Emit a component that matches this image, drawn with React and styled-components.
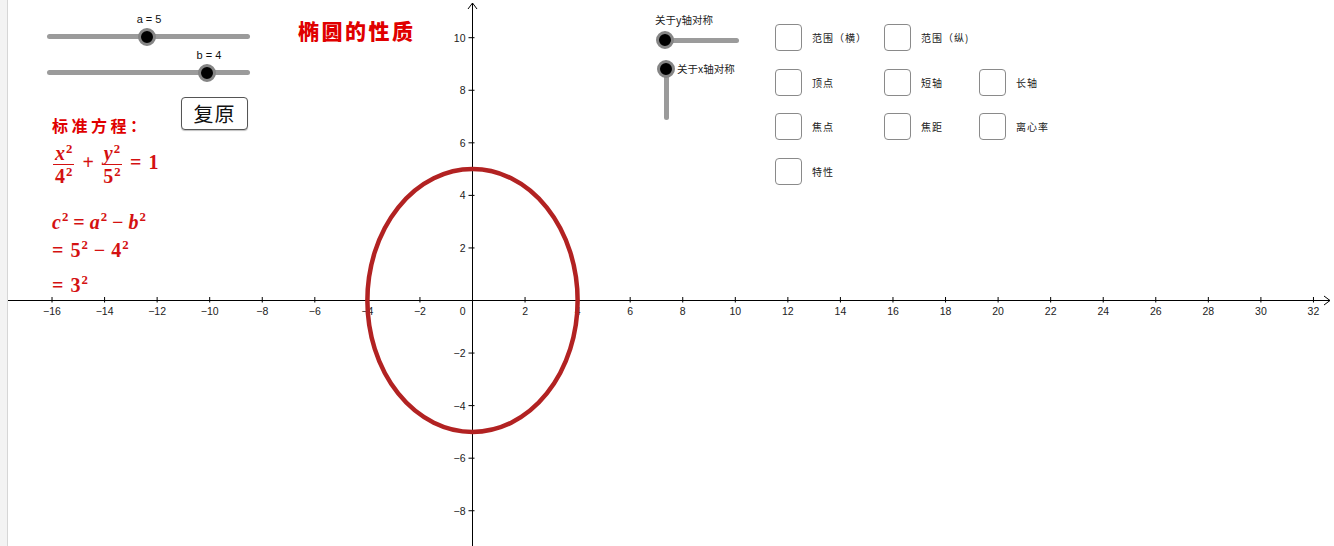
import React from 'react';
import styled, { createGlobalStyle } from 'styled-components';

const UNIT = 26.28;
const OX = 464.5;
const OY = 300.5;
const RED = '#e00000';
const MATH_RED = '#d41111';

const GlobalStyle = createGlobalStyle`
  html, body {
    margin: 0;
    padding: 0;
    background: #fff;
  }
  body {
    font-family: "Liberation Sans", Arial, sans-serif;
    overflow: hidden;
  }
`;

const Page = styled.div`
  display: flex;
  width: 1334px;
  height: 546px;
  overflow: hidden;
`;

const Gutter = styled.div`
  flex: none;
  width: 7px;
  background: #f3f3f3;
  border-right: 1px solid #d6d6d6;
`;

const Canvas = styled.div`
  position: relative;
  flex: 1;
  height: 100%;
  background: #fff;
`;

const GraphSvg = styled.svg`
  position: absolute;
  inset: 0;
  width: 100%;
  height: 100%;
`;

const TickLabel = styled.text`
  font-family: "Liberation Sans", Arial, sans-serif;
  font-size: 10.5px;
  fill: #222;
`;

// ---- free canvas objects ----
const Placed = styled.div`
  position: absolute;
  left: ${(p) => p.$x}px;
  top: ${(p) => p.$y}px;
`;

const SliderStack = styled.div`
  display: flex;
  flex-direction: column;
`;

const SliderBox = styled.div`
  position: relative;
  width: ${(p) => p.$length}px;
  padding: 22px 0 9px;
`;

const Track = styled.div`
  height: 5px;
  border-radius: 3px;
  background: #9b9b9b;
`;

const Knob = styled.div`
  position: absolute;
  width: 18px;
  height: 18px;
  box-sizing: border-box;
  border-radius: 50%;
  background: #000;
  border: 3px solid #858585;
`;

const SliderKnob = styled(Knob)`
  top: 15.5px;
  margin-left: -9px;
`;

const SliderLabel = styled.span`
  position: absolute;
  top: 0;
  transform: translateX(-50%);
  margin-left: 2px;
  font-size: 11px;
  line-height: 14px;
  color: #111;
  white-space: nowrap;
`;

const Title = styled.h1`
  margin: 0;
  font-family: "Noto Sans CJK SC", sans-serif;
  font-size: 21px;
  font-weight: 900;
  line-height: 26px;
  letter-spacing: 2.5px;
  color: ${RED};
`;

const ResetButton = styled.button`
  width: 67px;
  height: 33px;
  padding: 0;
  border: 1px solid #555;
  border-radius: 4px;
  background: #fff;
  box-shadow: 0 1px 1px rgba(0, 0, 0, 0.25);
  font-family: "Noto Sans CJK SC", sans-serif;
  font-size: 20px;
  line-height: 1;
  letter-spacing: 1px;
  color: #111;
`;

const FormulaBlock = styled.div`
  display: flex;
  flex-direction: column;
  color: ${MATH_RED};
`;

const Heading = styled.div`
  font-family: "Noto Sans CJK SC", sans-serif;
  font-size: 16px;
  font-weight: 700;
  line-height: 20px;
  letter-spacing: 3.5px;
  color: ${RED};
`;

const MathRow = styled.div`
  height: ${(p) => p.$h}px;
  line-height: ${(p) => p.$h}px;
  margin-top: ${(p) => p.$gap || 0}px;
  font-family: "Liberation Serif", "Times New Roman", serif;
  font-weight: 700;
  font-size: 20px;
  white-space: nowrap;
`;

const Frac = styled.span`
  display: inline-flex;
  flex-direction: column;
  align-items: stretch;
  vertical-align: middle;
  font-size: 20px;
  line-height: 19px;
  margin: 0 1px;
`;

const Num = styled.span`
  text-align: center;
  padding: 2px 2px 1px;
`;

const Den = styled.span`
  text-align: center;
  border-top: 1.6px solid currentColor;
  padding-top: 2px;
`;

const V = styled.i`
  font-style: italic;
`;

const Sup = styled.sup`
  font-size: 0.64em;
  line-height: 0;
  vertical-align: 0.6em;
  margin-left: 1px;
`;

const Op = styled.span`
  margin: 0 ${(p) => p.$m ?? 5}px;
  margin-right: ${(p) => p.$r ?? p.$m ?? 5}px;
`;

const ToggleGroup = styled.div`
  display: flex;
  flex-direction: column;
  font-family: "Noto Sans CJK SC", sans-serif;
  font-size: 10.5px;
  color: #222;
`;

const Caption = styled.span`
  line-height: 12px;
  margin-left: 1px;
`;

const HToggle = styled.div`
  position: relative;
  width: 83px;
  height: 18px;
  margin-top: 5px;
  margin-left: 2px;
`;

const HTrack = styled(Track)`
  position: absolute;
  left: 9px;
  right: 0;
  top: 6.5px;
`;

const VToggle = styled.div`
  display: flex;
  align-items: flex-start;
  margin-top: 11px;
  margin-left: 3px;
`;

const Stem = styled.div`
  position: relative;
  flex: none;
  width: 18px;
  height: 60px;
`;

const VTrack = styled(Track)`
  position: absolute;
  left: 6.5px;
  top: 9px;
  width: 5px;
  height: 51px;
`;

const StemLabel = styled.span`
  line-height: 18px;
  margin-left: 2px;
`;

const CheckGrid = styled.div`
  display: grid;
  grid-template-columns: 109px 95px auto;
  grid-auto-rows: 27px;
  row-gap: 17.5px;
`;

const CheckItem = styled.label`
  display: flex;
  align-items: center;
  gap: 10px;
  grid-column: ${(p) => p.$col};
  font-family: "Noto Sans CJK SC", sans-serif;
  font-size: 10px;
  letter-spacing: 1px;
  color: #222;
`;

const Box = styled.span`
  flex: none;
  width: 27px;
  height: 27px;
  box-sizing: border-box;
  border: 1.5px solid #8a8a8a;
  border-radius: 4px;
  background: #fff;
`;

function Slider({ name, value, pos, length }) {
  return (
    <SliderBox $length={length}>
      <SliderLabel style={{ left: `${pos * 100}%` }}>
        {name} = {value}
      </SliderLabel>
      <Track />
      <SliderKnob style={{ left: `${pos * 100}%` }} />
    </SliderBox>
  );
}

function Graph() {
  const xs = [];
  for (let k = -16; k <= 32; k += 2) if (k !== 0) xs.push(k);
  const ys = [];
  for (let k = -8; k <= 10; k += 2) if (k !== 0) ys.push(k);
  const fmt = (n) => (n < 0 ? `\u2212${-n}` : `${n}`);

  return (
    <GraphSvg viewBox="0 0 1326 546">
      <line x1="0" y1={OY} x2="1322" y2={OY} stroke="#000" strokeWidth="1" />
      <polyline points={`1316,${OY - 4.5} 1322,${OY} 1316,${OY + 4.5}`} fill="none" stroke="#000" strokeWidth="1" />
      <line x1={OX} y1="546" x2={OX} y2="3" stroke="#000" strokeWidth="1" />
      <polyline points={`${OX - 4.5},9 ${OX},3 ${OX + 4.5},9`} fill="none" stroke="#000" strokeWidth="1" />

      {xs.map((k) => {
        const x = OX + k * UNIT;
        return (
          <g key={`x${k}`}>
            <line x1={x} y1={OY - 3.5} x2={x} y2={OY + 2} stroke="#000" strokeWidth="1" />
            <TickLabel x={x} y={OY + 14} textAnchor="middle">
              {fmt(k)}
            </TickLabel>
          </g>
        );
      })}
      <TickLabel x={OX - 7} y={OY + 14} textAnchor="end">
        0
      </TickLabel>

      {ys.map((k) => {
        const y = OY - k * UNIT;
        return (
          <g key={`y${k}`}>
            <line x1={OX - 4} x2={OX + 2} y1={y} y2={y} stroke="#000" strokeWidth="1" />
            <TickLabel x={OX - 7} y={y + 4} textAnchor="end">
              {fmt(k)}
            </TickLabel>
          </g>
        );
      })}

      <ellipse cx={OX} cy={OY} rx={4 * UNIT} ry={5 * UNIT} fill="none" stroke="#b22222" strokeWidth="4.5" />
    </GraphSvg>
  );
}

const checks = [
  { label: '范围（横）', col: 1 },
  { label: '范围（纵)', col: 2 },
  { label: '顶点', col: 1 },
  { label: '短轴', col: 2 },
  { label: '长轴', col: 3 },
  { label: '焦点', col: 1 },
  { label: '焦距', col: 2 },
  { label: '离心率', col: 3 },
  { label: '特性', col: 1 },
];

export default function App() {
  return (
    <Page>
      <GlobalStyle />
      <Gutter />
      <Canvas>
        <Graph />

        <Placed $x={39} $y={12}>
          <SliderStack>
            <Slider name="a" value={5} pos={0.493} length={203} />
            <Slider name="b" value={4} pos={0.788} length={203} />
          </SliderStack>
        </Placed>

        <Placed $x={290} $y={17}>
          <Title>椭圆的性质</Title>
        </Placed>

        <Placed $x={173} $y={97}>
          <ResetButton>复原</ResetButton>
        </Placed>

        <Placed $x={44} $y={115}>
          <FormulaBlock>
            <Heading>标准方程：</Heading>
            <MathRow $h={46} $gap={4}>
              <Frac>
                <Num>
                  <V>x</V>
                  <Sup>2</Sup>
                </Num>
                <Den>
                  4<Sup>2</Sup>
                </Den>
              </Frac>
              <Op $m={7}>+</Op>
              <Frac>
                <Num>
                  <V>y</V>
                  <Sup>2</Sup>
                </Num>
                <Den>
                  5<Sup>2</Sup>
                </Den>
              </Frac>
              <Op $m={7}>=</Op>1
            </MathRow>
            <MathRow $h={26} $gap={24}>
              <V>c</V>
              <Sup>2</Sup>
              <Op>=</Op>
              <V>a</V>
              <Sup>2</Sup>
              <Op>−</Op>
              <V>b</V>
              <Sup>2</Sup>
            </MathRow>
            <MathRow $h={26} $gap={2}>
              <Op $m={0} $r={7}>=</Op>5<Sup>2</Sup>
              <Op $m={6}>−</Op>4<Sup>2</Sup>
            </MathRow>
            <MathRow $h={26} $gap={9}>
              <Op $m={0} $r={7}>=</Op>3<Sup>2</Sup>
            </MathRow>
          </FormulaBlock>
        </Placed>

        <Placed $x={646} $y={14}>
          <ToggleGroup>
            <Caption>关于y轴对称</Caption>
            <HToggle>
              <HTrack />
              <Knob style={{ left: 0, top: 0 }} />
            </HToggle>
            <VToggle>
              <Stem>
                <VTrack />
                <Knob style={{ left: 0, top: 0 }} />
              </Stem>
              <StemLabel>关于x轴对称</StemLabel>
            </VToggle>
          </ToggleGroup>
        </Placed>

        <Placed $x={767} $y={24}>
          <CheckGrid>
            {checks.map((c) => (
              <CheckItem key={c.label} $col={c.col}>
                <Box />
                {c.label}
              </CheckItem>
            ))}
          </CheckGrid>
        </Placed>
      </Canvas>
    </Page>
  );
}
